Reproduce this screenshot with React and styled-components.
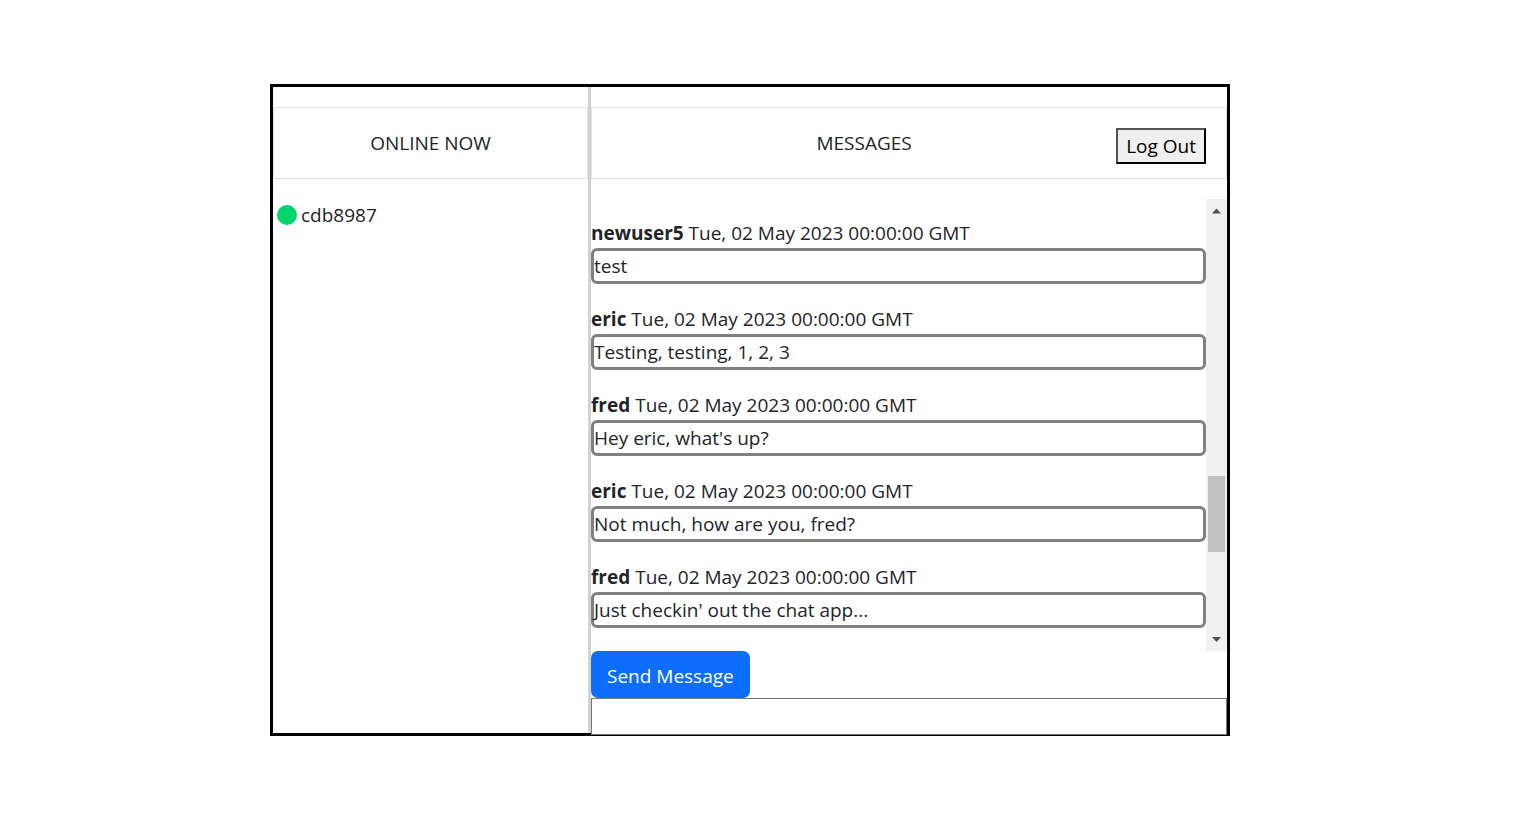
import React from "react";
import styled, { createGlobalStyle } from "styled-components";

const GlobalStyle = createGlobalStyle`
  *, *::before, *::after { box-sizing: border-box; }
  body {
    margin: 0;
    background: #fff;
    color: #212529;
    font-family: "Segoe UI", "Open Sans", "Noto Sans", sans-serif;
    font-size: 19px;
    line-height: 30px;
  }
  button, input { font: inherit; }
`;

const Page = styled.main`
  display: flex;
  justify-content: center;
  padding: 84px 29px 84px 0;
`;

const Frame = styled.div`
  display: grid;
  grid-template-columns: 1fr 2fr;
  width: 64%;
  min-width: 720px;
  border: 3px solid #000;
`;

const Column = styled.section`
  display: flex;
  flex-direction: column;
  min-width: 0;
  padding-top: 20px;
  border-right: ${(p) => (p.$divided ? "3px solid #d3d3d3" : "0")};
`;

const Header = styled.header`
  display: flex;
  align-items: flex-start;
  padding: 20px 20px ${(p) => (p.$withButton ? "14px" : "20px")};
  margin-bottom: 20px;
  border: 1px solid #dee2e6;
`;

const Title = styled.h2`
  flex: 1;
  margin: 0;
  font-size: inherit;
  font-weight: 400;
  text-align: center;
`;

const LogOutButton = styled.button`
  height: 36px;
  padding: 1px 8px;
  border: 2px outset #000;
  border-radius: 0;
  background: #efefef;
  color: #000;
`;

const UserList = styled.ul`
  margin: 0;
  padding: 0 4px;
  list-style: none;
`;

const User = styled.li`
  display: flex;
  align-items: center;
  gap: 4px;
  height: 32px;
`;

const OnlineDot = styled.span`
  width: 20px;
  height: 20px;
  border-radius: 50%;
  background: #00d46a;
`;

const MessagePane = styled.div`
  display: flex;
  height: 452px;
`;

const MessageList = styled.ol`
  flex: 1;
  min-width: 0;
  margin: 0;
  padding: 19px 0 0;
  overflow: hidden;
  list-style: none;
`;

const Message = styled.li`
  margin-bottom: 20px;
`;

const Bubble = styled.p`
  margin: 0;
  border: 3px solid #808080;
  border-radius: 6px;
`;

const Scrollbar = styled.div`
  display: flex;
  flex-direction: column;
  width: 21px;
  background: #f0f0f0;
`;

const ScrollArrow = styled.svg`
  display: block;
  width: 21px;
  height: 24px;
  fill: #505050;
`;

const Track = styled.div`
  flex: 1;
  padding: 253px 2px 0;
`;

const Thumb = styled.div`
  height: 76px;
  background: #c1c1c1;
`;

const Composer = styled.form`
  display: flex;
  flex-direction: column;
  align-items: flex-start;
  margin: 0 0 -2px;
`;

const SendButton = styled.button`
  height: 47px;
  padding: 2px 16px 0;
  border: 0;
  border-radius: 7px;
  background: #0d6efd;
  color: #fff;
`;

const MessageInput = styled.input`
  width: 100%;
  height: 37px;
  padding: 1px 2px;
  border: 1px solid #767676;
  background: #fff;
`;

const DATE = "Tue, 02 May 2023 00:00:00 GMT";
const users = ["cdb8987"];
const messages = [
  { author: "newuser5", text: "test" },
  { author: "eric", text: "Testing, testing, 1, 2, 3" },
  { author: "fred", text: "Hey eric, what's up?" },
  { author: "eric", text: "Not much, how are you, fred?" },
  { author: "fred", text: "Just checkin' out the chat app..." },
];

export default function App() {
  return (
    <>
      <GlobalStyle />
      <Page>
        <Frame>
          <Column $divided>
            <Header>
              <Title>ONLINE NOW</Title>
            </Header>
            <UserList>
              {users.map((name) => (
                <User key={name}>
                  <OnlineDot />
                  {name}
                </User>
              ))}
            </UserList>
          </Column>
          <Column>
            <Header $withButton>
              <Title>MESSAGES</Title>
              <LogOutButton type="button">Log Out</LogOutButton>
            </Header>
            <MessagePane>
              <MessageList>
                {messages.map((m, i) => (
                  <Message key={i}>
                    <div>
                      <strong>{m.author}</strong> {DATE}
                    </div>
                    <Bubble>{m.text}</Bubble>
                  </Message>
                ))}
              </MessageList>
              <Scrollbar aria-hidden="true">
                <ScrollArrow viewBox="0 0 21 24">
                  <path d="M6 14.5 L10.5 9.5 L15 14.5 Z" />
                </ScrollArrow>
                <Track>
                  <Thumb />
                </Track>
                <ScrollArrow viewBox="0 0 21 24">
                  <path d="M6 10 L15 10 L10.5 15 Z" />
                </ScrollArrow>
              </Scrollbar>
            </MessagePane>
            <Composer onSubmit={(e) => e.preventDefault()}>
              <SendButton type="submit">Send Message</SendButton>
              <MessageInput type="text" aria-label="Message" />
            </Composer>
          </Column>
        </Frame>
      </Page>
    </>
  );
}
